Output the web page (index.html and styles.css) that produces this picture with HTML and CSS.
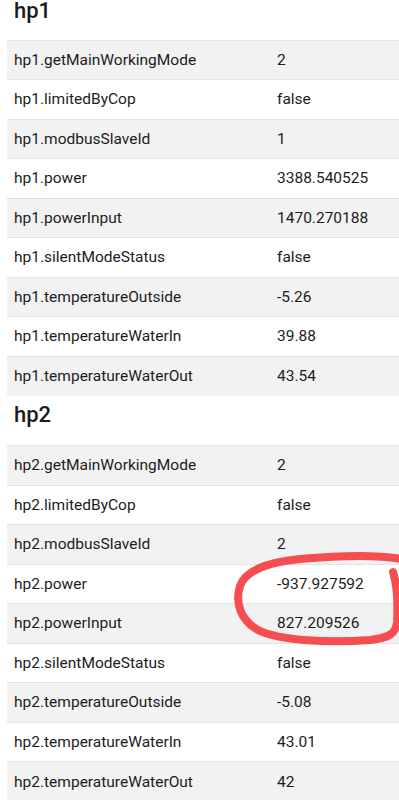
FILE: index.html
```html
<!DOCTYPE html>
<html lang="en">
<head>
<meta charset="utf-8">
<title>hp values</title>
<link rel="stylesheet" href="styles.css">
</head>
<body>
<div class="page">
  <section class="group">
    <h2 class="group-title">hp1</h2>
    <table class="kv">
      <colgroup><col class="col-key"><col class="col-val"></colgroup>
      <tbody>
        <tr><td>hp1.getMainWorkingMode</td><td>2</td></tr>
        <tr><td>hp1.limitedByCop</td><td>false</td></tr>
        <tr><td>hp1.modbusSlaveId</td><td>1</td></tr>
        <tr><td>hp1.power</td><td>3388.540525</td></tr>
        <tr><td>hp1.powerInput</td><td>1470.270188</td></tr>
        <tr><td>hp1.silentModeStatus</td><td>false</td></tr>
        <tr><td>hp1.temperatureOutside</td><td>-5.26</td></tr>
        <tr><td>hp1.temperatureWaterIn</td><td>39.88</td></tr>
        <tr><td>hp1.temperatureWaterOut</td><td>43.54</td></tr>
      </tbody>
    </table>
  </section>
  <section class="group">
    <h2 class="group-title">hp2</h2>
    <table class="kv">
      <colgroup><col class="col-key"><col class="col-val"></colgroup>
      <tbody>
        <tr><td>hp2.getMainWorkingMode</td><td>2</td></tr>
        <tr><td>hp2.limitedByCop</td><td>false</td></tr>
        <tr><td>hp2.modbusSlaveId</td><td>2</td></tr>
        <tr><td>hp2.power</td><td>-937.927592</td></tr>
        <tr><td>hp2.powerInput</td><td>827.209526</td></tr>
        <tr><td>hp2.silentModeStatus</td><td>false</td></tr>
        <tr><td>hp2.temperatureOutside</td><td>-5.08</td></tr>
        <tr><td>hp2.temperatureWaterIn</td><td>43.01</td></tr>
        <tr><td>hp2.temperatureWaterOut</td><td>42</td></tr>
      </tbody>
    </table>
  </section>
</div>
<svg class="scribble" viewBox="0 0 399 800" width="399" height="800" aria-hidden="true">
  <path d="M 401 559 C 380 555, 345 555, 300 559 C 262 563, 245 572, 240 586 C 235 602, 240 620, 258 630 C 280 641, 330 643, 370 640 C 388 638, 396 634, 397 622 C 398 605, 397 585, 393 572"/>
</svg>
</body>
</html>
```

FILE: styles.css
```css
html, body {
  margin: 0;
  padding: 0;
  background: #ffffff;
}

body {
  position: relative;
  overflow: hidden;
  width: 399px;
  height: 800px;
  font-family: Roboto, "Liberation Sans", sans-serif;
  color: #1c1c1c;
}

.page {
  padding-left: 7px;
}

.group-title {
  margin: 0;
  padding: 6px 0 17.5px 7px;
  font-size: 22px;
  line-height: 26px;
  font-weight: 500;
  color: #1a1a1a;
}

.group:first-child .group-title {
  padding-top: 0;
  padding-bottom: 17.5px;
  line-height: 22px;
}

.kv {
  width: 392px;
  border-collapse: collapse;
  table-layout: fixed;
  font-size: 15.5px;
}

.col-key {
  width: 263px;
}

.kv td {
  height: 39.5px;
  box-sizing: border-box;
  padding: 0 7px;
  vertical-align: middle;
  border-top: 1px solid #e3e3e3;
  white-space: nowrap;
  line-height: 20px;
}

.kv tr:nth-child(odd) td {
  background: #f2f2f2;
}

.scribble {
  position: absolute;
  top: 0;
  left: 0;
  pointer-events: none;
}

.scribble path {
  fill: none;
  stroke: #f64d51;
  stroke-width: 8;
  stroke-linecap: round;
  stroke-linejoin: round;
}
```
